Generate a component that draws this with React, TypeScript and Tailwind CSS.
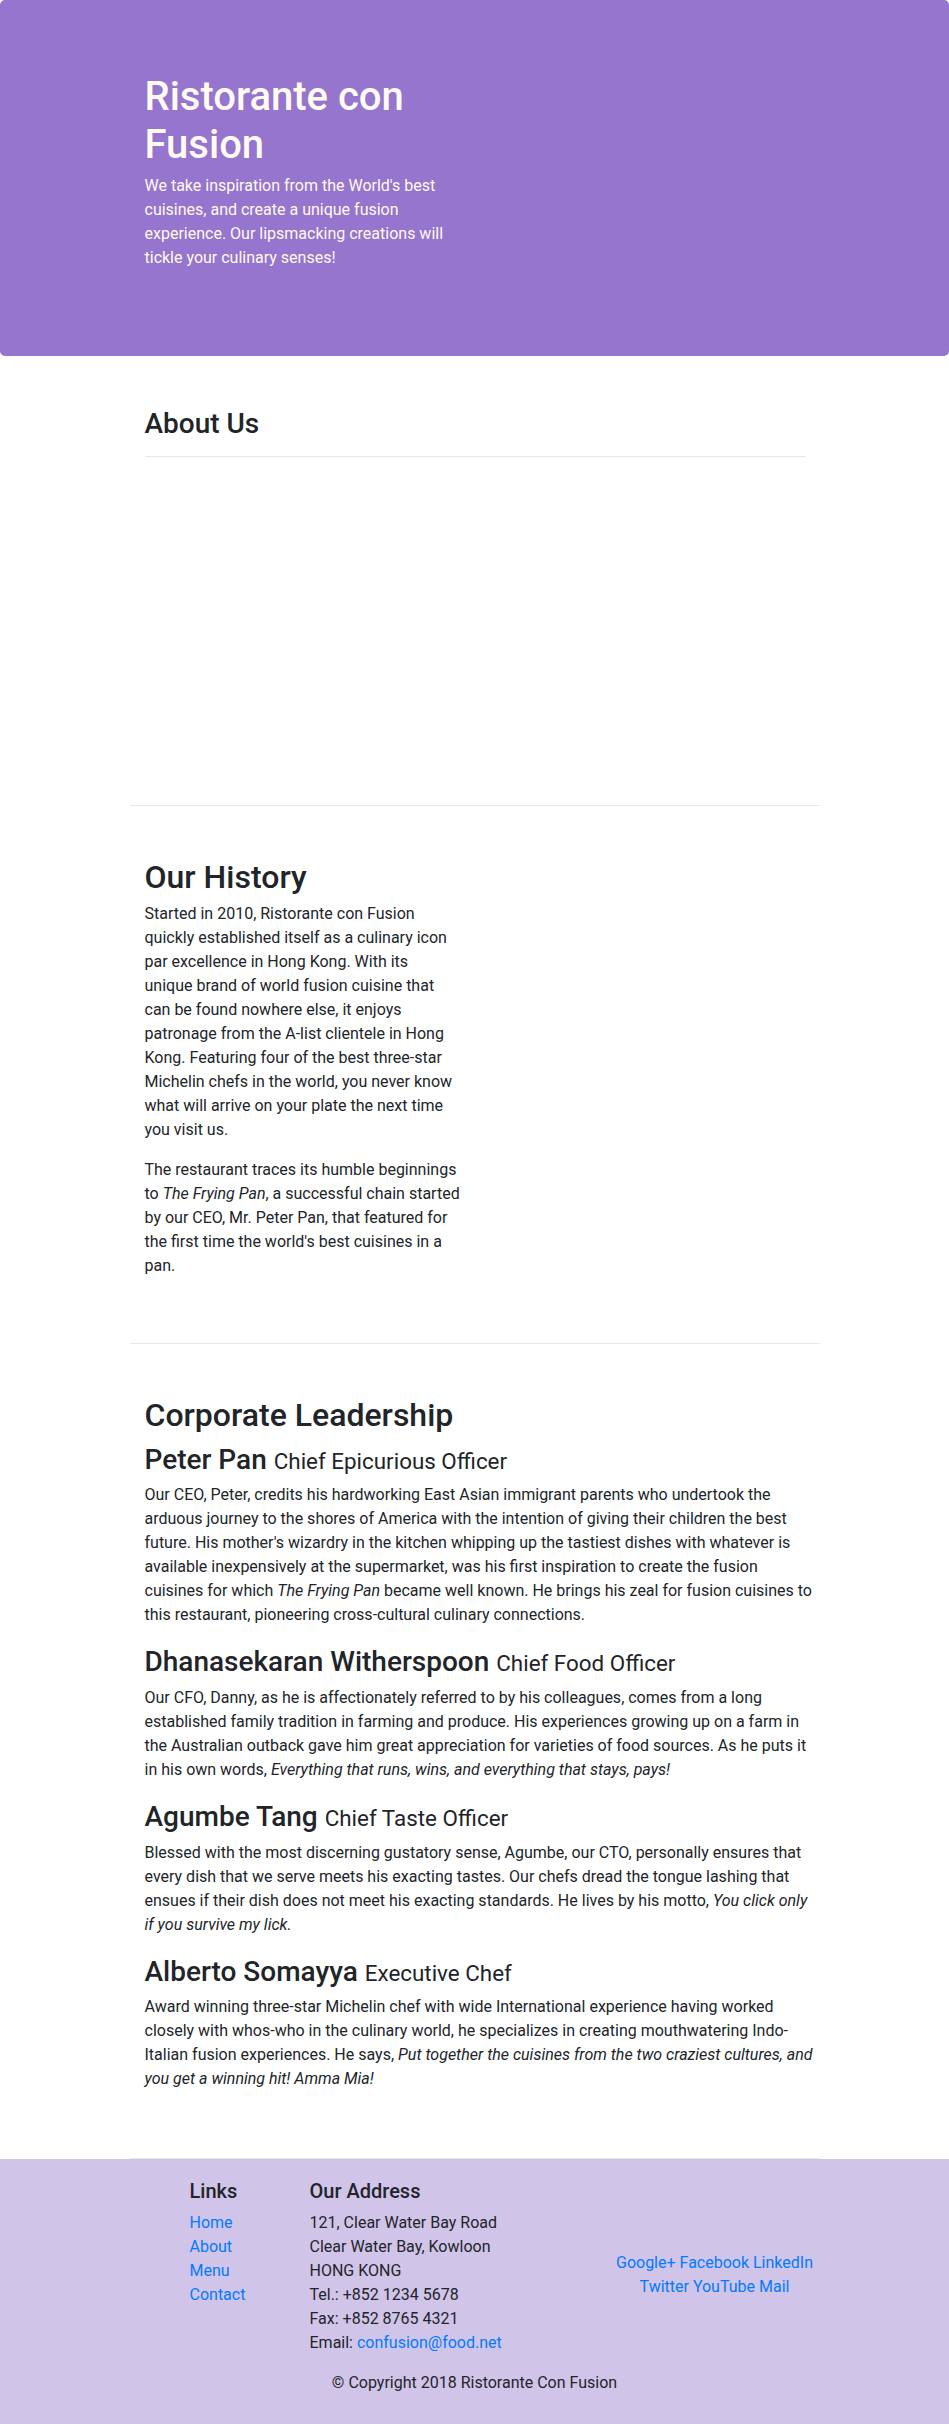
import React from "react";

function Leader({
  name,
  title,
  children,
}: {
  name: string;
  title: string;
  children: React.ReactNode;
}) {
  return (
    <li className="flex items-start">
      <div className="flex-1">
        <h3 className="text-[28px] leading-[33.6px] font-medium pt-[2px] mb-[5px]">
          {name} <small className="text-[80%] font-normal">{title}</small>
        </h3>
        <p className="mb-4 whitespace-nowrap">{children}</p>
      </div>
    </li>
  );
}

export default function App() {
  return (
    <div className="font-['Roboto',sans-serif] text-[16px] leading-[24px] text-[#212529] bg-white">
      {/* Jumbotron */}
      <header className="bg-[#9575cd] text-[#fffaf0] rounded-[5px] px-[30px] py-[70px]">
        <div className="max-w-[720px] mx-auto px-[15px]">
          <div className="w-[345px] px-[15px]">
            <h1 className="text-[40px] leading-[48px] font-medium pt-[3px] mb-[5px]">
              Ristorante con Fusion
            </h1>
            <p className="mb-4 whitespace-nowrap">
              We take inspiration from the World's best
              <br />
              cuisines, and create a unique fusion
              <br />
              experience. Our lipsmacking creations will
              <br />
              tickle your culinary senses!
            </p>
          </div>
        </div>
      </header>

      <div className="max-w-[720px] mx-auto px-[15px]">
        {/* About Us */}
        <section className="h-[450px] border-b border-[#e8e8e8] pt-[50px]">
          <div className="px-[15px]">
            <h3 className="text-[28px] leading-[33.6px] font-medium pt-[1px] mb-0">About Us</h3>
            <hr className="mt-[15px] border-0 border-t border-[#e6e6e6]" />
          </div>
        </section>

        {/* Our History */}
        <section className="flex border-b border-[#e8e8e8] pt-[50px] pb-[49px]">
          <div className="w-1/2 px-[15px]">
            <h2 className="text-[32px] leading-[38.4px] font-medium pt-[2px] mb-[6px]">Our History</h2>
            <p className="mb-4 whitespace-nowrap">
              Started in 2010, Ristorante con Fusion
              <br />
              quickly established itself as a culinary icon
              <br />
              par excellence in Hong Kong. With its
              <br />
              unique brand of world fusion cuisine that
              <br />
              can be found nowhere else, it enjoys
              <br />
              patronage from the A-list clientele in Hong
              <br />
              Kong. Featuring four of the best three-star
              <br />
              Michelin chefs in the world, you never know
              <br />
              what will arrive on your plate the next time
              <br />
              you visit us.
            </p>
            <p className="mb-4 whitespace-nowrap">
              The restaurant traces its humble beginnings
              <br />
              to <em>The Frying Pan</em>, a successful chain started
              <br />
              by our CEO, Mr. Peter Pan, that featured for
              <br />
              the first time the world's best cuisines in a
              <br />
              pan.
            </p>
          </div>
          <div className="w-1/2 px-[15px]" />
        </section>

        {/* Corporate Leadership */}
        <section className="border-b border-[#e8e8e8] pt-[50px] pb-[51px]">
          <div className="px-[15px]">
            <h2 className="text-[32px] leading-[38.4px] font-medium pt-[2px] mb-[6px]">
              Corporate Leadership
            </h2>
          </div>
          <div className="px-[15px]">
            <ul className="list-none mb-0">
              <Leader name="Peter Pan" title="Chief Epicurious Officer">
                Our CEO, Peter, credits his hardworking East Asian immigrant parents who undertook the
                <br />
                arduous journey to the shores of America with the intention of giving their children the best
                <br />
                future. His mother's wizardry in the kitchen whipping up the tastiest dishes with whatever is
                <br />
                available inexpensively at the supermarket, was his first inspiration to create the fusion
                <br />
                cuisines for which <em>The Frying Pan</em> became well known. He brings his zeal for fusion cuisines to
                <br />
                this restaurant, pioneering cross-cultural culinary connections.
              </Leader>
              <Leader name="Dhanasekaran Witherspoon" title="Chief Food Officer">
                Our CFO, Danny, as he is affectionately referred to by his colleagues, comes from a long
                <br />
                established family tradition in farming and produce. His experiences growing up on a farm in
                <br />
                the Australian outback gave him great appreciation for varieties of food sources. As he puts it
                <br />
                in his own words, <em>Everything that runs, wins, and everything that stays, pays!</em>
              </Leader>
              <Leader name="Agumbe Tang" title="Chief Taste Officer">
                Blessed with the most discerning gustatory sense, Agumbe, our CTO, personally ensures that
                <br />
                every dish that we serve meets his exacting tastes. Our chefs dread the tongue lashing that
                <br />
                ensues if their dish does not meet his exacting standards. He lives by his motto, <em>You click only</em>
                <br />
                <em>if you survive my lick.</em>
              </Leader>
              <Leader name="Alberto Somayya" title="Executive Chef">
                Award winning three-star Michelin chef with wide International experience having worked
                <br />
                closely with whos-who in the culinary world, he specializes in creating mouthwatering Indo-
                <br />
                Italian fusion experiences. He says, <em>Put together the cuisines from the two craziest cultures, and</em>
                <br />
                <em>you get a winning hit! Amma Mia!</em>
              </Leader>
            </ul>
          </div>
        </section>
      </div>

      {/* Footer */}
      <footer className="bg-[#d1c4e9] py-[20px]">
        <div className="max-w-[720px] mx-auto px-[15px]">
          <div className="flex -mx-[15px]">
            <div className="ml-[60px] w-[120px] px-[15px]">
              <h5 className="text-[20px] leading-[24px] font-medium mb-2">Links</h5>
              <ul className="list-none mb-4">
                <li><a className="text-[#007bff]" href="#">Home</a></li>
                <li><a className="text-[#007bff]" href="#">About</a></li>
                <li><a className="text-[#007bff]" href="#">Menu</a></li>
                <li><a className="text-[#007bff]" href="#">Contact</a></li>
              </ul>
            </div>
            <div className="w-[300px] px-[15px]">
              <h5 className="text-[20px] leading-[24px] font-medium mb-2">Our Address</h5>
              <address className="not-italic mb-4">
                121, Clear Water Bay Road
                <br />
                Clear Water Bay, Kowloon
                <br />
                HONG KONG
                <br />
                Tel.: +852 1234 5678
                <br />
                Fax: +852 8765 4321
                <br />
                Email: <a className="text-[#007bff]" href="#">confusion@food.net</a>
              </address>
            </div>
            <div className="w-[240px] px-[15px] self-center">
              <div className="text-center">
                <a className="text-[#007bff]" href="#">Google+</a>{" "}
                <a className="text-[#007bff]" href="#">Facebook</a>{" "}
                <a className="text-[#007bff]" href="#">LinkedIn</a>{" "}
                <a className="text-[#007bff]" href="#">Twitter</a>{" "}
                <a className="text-[#007bff]" href="#">YouTube</a>{" "}
                <a className="text-[#007bff]" href="#">Mail</a>
              </div>
            </div>
          </div>
          <div className="flex justify-center">
            <p className="mb-4 px-[15px]">© Copyright 2018 Ristorante Con Fusion</p>
          </div>
        </div>
      </footer>
    </div>
  );
}
